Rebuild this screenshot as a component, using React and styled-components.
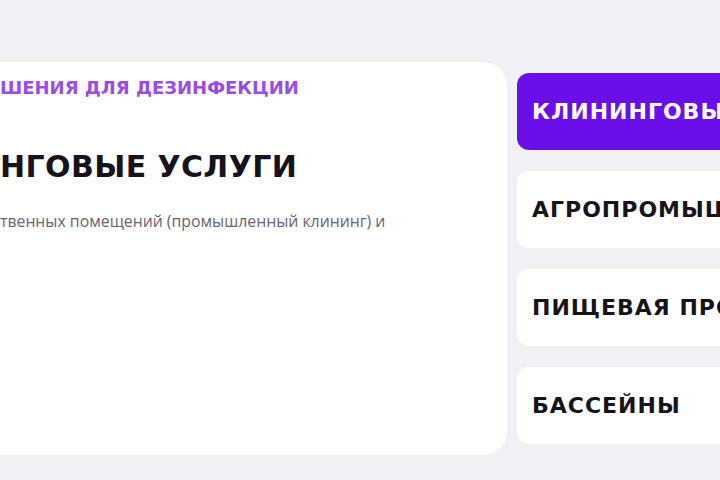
import React from 'react'
import styled, { createGlobalStyle } from 'styled-components'

const GlobalStyle = createGlobalStyle`
  html, body {
    margin: 0;
    padding: 0;
    background: #f1f0f5;
    overflow: hidden;
  }
`

const Page = styled.div`
  width: 720px;
  height: 480px;
  overflow: hidden;
  padding-top: 62px;
  box-sizing: border-box;
`

const Row = styled.div`
  display: flex;
  align-items: flex-start;
  gap: 10px;
  margin-left: -40px;
`

const Card = styled.div`
  flex: 0 0 547px;
  height: 393px;
  background: #ffffff;
  border-radius: 24px;
  padding: 14px 0 0 40px;
  box-sizing: border-box;
`

const Eyebrow = styled.div`
  font-family: 'DejaVu Sans', sans-serif;
  font-weight: bold;
  font-size: 18px;
  line-height: 24px;
  color: #9a4ce9;
  white-space: nowrap;
`

const Title = styled.h1`
  margin: 49px 0 0;
  font-family: 'DejaVu Sans', sans-serif;
  font-weight: bold;
  font-size: 30px;
  line-height: 36px;
  letter-spacing: 0.4px;
  color: #17131c;
  white-space: nowrap;
`

const Text = styled.p`
  margin: 24px 0 0;
  font-family: 'Open Sans', sans-serif;
  font-size: 15.8px;
  line-height: 24px;
  color: #6b6477;
  white-space: nowrap;
`

const Tabs = styled.div`
  flex: 0 0 auto;
  display: flex;
  flex-direction: column;
  gap: 21px;
  margin-top: 11px;
`

const Tab = styled.div`
  width: 320px;
  height: 77px;
  box-sizing: border-box;
  padding-left: 15px;
  display: flex;
  align-items: center;
  border-radius: 12px;
  background: ${(p) => (p.$active ? '#6a0fe8' : '#ffffff')};
  color: ${(p) => (p.$active ? '#ffffff' : '#17131c')};
  font-family: 'DejaVu Sans', sans-serif;
  font-weight: bold;
  font-size: 22px;
  letter-spacing: 1px;
  white-space: nowrap;
  overflow: hidden;
`

const tabs = [
  'КЛИНИНГОВЫЕ УСЛУГИ',
  'АГРОПРОМЫШЛЕННОСТЬ',
  'ПИЩЕВАЯ ПРОМЫШЛЕННОСТЬ',
  'БАССЕЙНЫ',
]

export default function App() {
  return (
    <>
      <GlobalStyle />
      <Page>
        <Row>
          <Card>
            <Eyebrow>ШЕНИЯ ДЛЯ ДЕЗИНФЕКЦИИ</Eyebrow>
            <Title>НГОВЫЕ УСЛУГИ</Title>
            <Text>твенных помещений (промышленный клининг) и</Text>
          </Card>
          <Tabs>
            {tabs.map((t, i) => (
              <Tab key={t} $active={i === 0}>
                {t}
              </Tab>
            ))}
          </Tabs>
        </Row>
      </Page>
    </>
  )
}
